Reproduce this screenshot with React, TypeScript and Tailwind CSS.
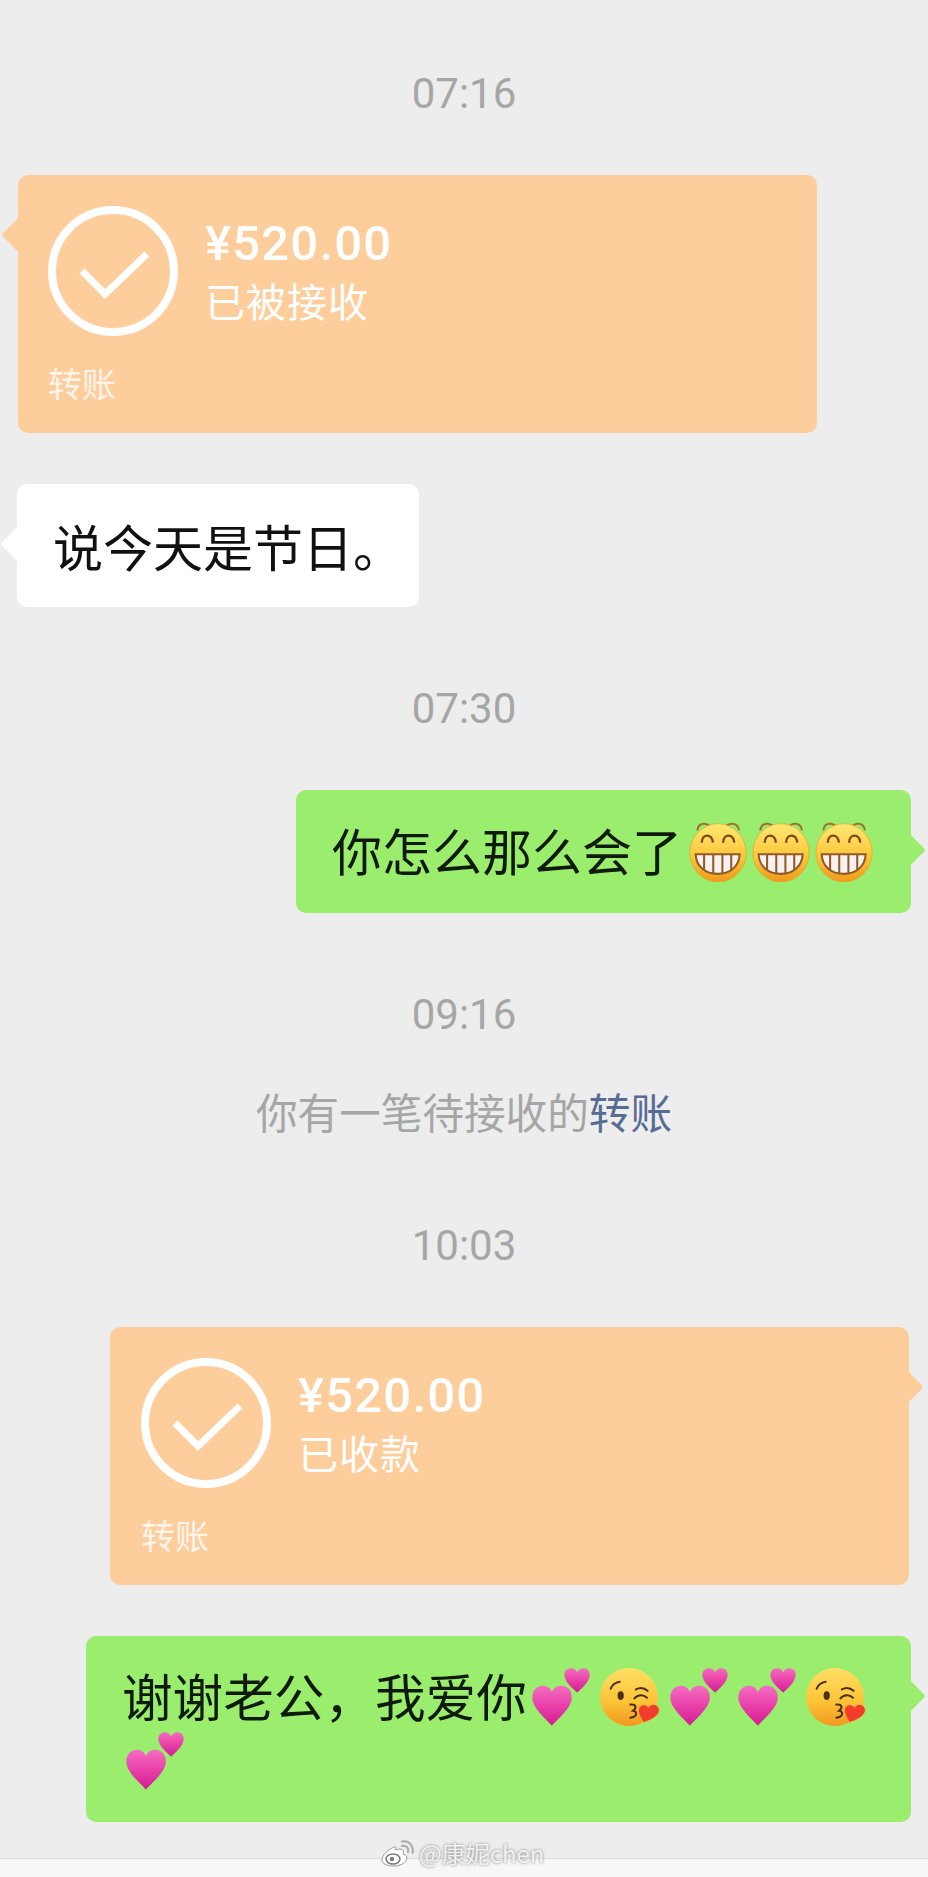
import React from "react";

function Time({ children, className = "" }: { children: React.ReactNode; className?: string }) {
  return (
    <div className={`h-[50px] text-center text-[42px] leading-[50px] text-[#a6a6a6] font-['Roboto',sans-serif] ${className}`}>
      {children}
    </div>
  );
}

function Notch({ side, color }: { side: "left" | "right"; color: string }) {
  return (
    <div
      className={`absolute top-[46px] h-[28px] w-[28px] rotate-45 rounded-[3px] ${color} ${
        side === "left" ? "left-[-11px]" : "right-[-9px]"
      }`}
    />
  );
}

function Check() {
  return (
    <svg width="130" height="130" viewBox="0 0 130 130" className="shrink-0">
      <circle cx="65" cy="65" r="61" fill="none" stroke="#fff" strokeWidth="8" />
      <path d="M34 65 L57 88 L99 48" fill="none" stroke="#fff" strokeWidth="7" />
    </svg>
  );
}

function Transfer({ status, side, className }: { status: string; side: "left" | "right"; className: string }) {
  return (
    <div className={`relative h-[258px] rounded-[10px] bg-[#fdcd9c] pt-[31px] text-white ${className}`}>
      <Notch side={side} color="bg-[#fdcd9c]" />
      <div className="relative flex items-center gap-[27px]">
        <Check />
        <div className="flex flex-col">
          <div className="h-[59px] pt-[2px] font-['Roboto',sans-serif] text-[49px] font-medium leading-[59px] tracking-[1.2px]">¥520.00</div>
          <div className="h-[59px] text-[40px] leading-[59px] tracking-[1px]">{status}</div>
        </div>
      </div>
      <div className="relative mt-[27px] h-[40px] text-[34px] leading-[40px] text-[#fff5ea]">转账</div>
    </div>
  );
}

function Grin() {
  const id = React.useId();
  return (
    <svg width="58" height="61" viewBox="0 0 170 180" className="shrink-0">
      <defs>
        <linearGradient id={id} x1="0" y1="0" x2="0" y2="1">
          <stop offset="0" stopColor="#ffe873" />
          <stop offset="0.55" stopColor="#fdc83c" />
          <stop offset="1" stopColor="#f09a1c" />
        </linearGradient>
      </defs>
      <path d="M24 28 C26 4 56 0 64 24" fill="none" stroke="#9c7033" strokeWidth="6" />
      <path d="M106 24 C114 0 144 4 147 28" fill="none" stroke="#9c7033" strokeWidth="6" />
      <ellipse cx="85" cy="94" rx="83" ry="86" fill={`url(#${id})`} stroke="#e6a02c" strokeWidth="2" />
      <path d="M37 64 C38 36 68 36 70 64" fill="none" stroke="#7c4a1c" strokeWidth="7" />
      <path d="M100 64 C101 36 131 36 133 64" fill="none" stroke="#7c4a1c" strokeWidth="7" />
      <path d="M19 98 H149 C147 135 120 156 84 156 C48 156 21 135 19 98 Z" fill="#fbf1f1" stroke="#8f5a26" strokeWidth="6" />
      <path d="M44 100 V144 M71 100 V155 M98 100 V155 M124 100 V144" stroke="#8f5a26" strokeWidth="6" />
    </svg>
  );
}

function Hearts() {
  const id = React.useId();
  return (
    <svg width="58" height="58" viewBox="0 0 170 172" className="shrink-0">
      <defs>
        <linearGradient id={id} x1="0" y1="0" x2="0" y2="1">
          <stop offset="0" stopColor="#f56cc2" />
          <stop offset="0.5" stopColor="#e840a8" />
          <stop offset="1" stopColor="#d41c94" />
        </linearGradient>
      </defs>
      <path
        d="M58 171 C40 150 0 118 0 88 C0 65 15 53 32 53 C44 53 53 60 58 72 C63 60 72 53 85 53 C103 53 117 65 117 88 C117 118 76 150 58 171 Z"
        fill={`url(#${id})`}
      />
      <path
        d="M133 73 C120 60 95 42 95 20 C95 8 104 1 115 1 C123 1 129 5 133 13 C137 5 144 1 151 1 C162 1 170 8 170 20 C170 42 146 60 133 73 Z"
        fill={`url(#${id})`}
      />
    </svg>
  );
}

function Kiss() {
  const id = React.useId();
  return (
    <svg width="60" height="58" viewBox="0 0 174 168" className="shrink-0">
      <defs>
        <linearGradient id={id} x1="0" y1="0" x2="0" y2="1">
          <stop offset="0" stopColor="#ffe064" />
          <stop offset="0.6" stopColor="#fcc236" />
          <stop offset="1" stopColor="#f2981e" />
        </linearGradient>
      </defs>
      <circle cx="84" cy="84" r="84" fill={`url(#${id})`} />
      <path d="M31 60 C35 50 44 42 57 40" fill="none" stroke="#4a2f14" strokeWidth="6" strokeLinecap="round" />
      <ellipse cx="60" cy="80" rx="9" ry="13" fill="#4a2f14" />
      <path d="M104 62 C115 56 128 57 138 66" fill="none" stroke="#4a2f14" strokeWidth="6" strokeLinecap="round" />
      <path d="M100 88 C110 76 126 76 136 86" fill="none" stroke="#4a2f14" strokeWidth="6" strokeLinecap="round" />
      <path d="M88 106 C104 104 108 114 96 124 C110 126 108 142 88 144" fill="none" stroke="#4a2f14" strokeWidth="6" strokeLinecap="round" />
      <path
        d="M126 158 C118 142 106 128 114 114 C120 104 134 104 140 114 C148 102 165 103 171 116 C177 132 158 148 126 158 Z"
        fill="#f23d2c"
        stroke="#fcc236"
        strokeWidth="2"
      />
    </svg>
  );
}

export default function App() {
  return (
    <div className="relative flex h-[1877px] w-[928px] flex-col overflow-hidden bg-[#ededed] pt-[69px] font-['Noto_Sans_CJK_SC',sans-serif]">
      <Time>07:16</Time>
      <Transfer status="已被接收" side="left" className="ml-[18px] mt-[56px] w-[799px] pl-[30px]" />

      <div className="relative ml-[17px] mt-[51px] h-[123px] w-[402px] rounded-[10px] bg-white pl-[36px] pt-[29px] text-[50px] leading-[64px] text-[#111]">
        <Notch side="left" color="bg-white" />
        <span className="relative">说今天是节日。</span>
      </div>

      <Time className="mt-[77px]">07:30</Time>

      <div className="relative ml-[296px] mt-[56px] h-[123px] w-[615px] rounded-[10px] bg-[#9aed6d] pl-[36px] pt-[29px] text-[50px] leading-[64px] text-[#0f1a0a]">
        <Notch side="right" color="bg-[#9aed6d]" />
        <div className="relative flex h-[64px] items-center">
          <span className="pb-[4px]">你怎么那么会了</span>
          <div className="ml-[7px] flex gap-[5px]">
            <Grin />
            <Grin />
            <Grin />
          </div>
        </div>
      </div>

      <Time className="mt-[77px]">09:16</Time>

      <div className="mt-[46px] h-[52px] text-center text-[41.6px] leading-[50px] text-[#a6a6a6]">
        你有一笔待接收的<span className="text-[#576b95]">转账</span>
      </div>

      <Time className="mt-[83px]">10:03</Time>

      <Transfer status="已收款" side="right" className="ml-[110px] mt-[56px] w-[799px] pl-[31px]" />

      <div className="relative ml-[86px] mt-[51px] h-[186px] w-[825px] rounded-[10px] bg-[#9aed6d] pl-[36px] pt-[29px] text-[50.6px] leading-[64px] text-[#0f1a0a]">
        <Notch side="right" color="bg-[#9aed6d]" />
        <div className="relative flex h-[64px] items-center">
          <span className="pb-[4px]">谢谢老公，我爱你</span>
          <div className="ml-[5px] flex gap-[10px]">
            <Hearts />
            <Kiss />
            <Hearts />
            <Hearts />
            <Kiss />
          </div>
        </div>
        <div className="relative flex h-[64px] items-center pl-[4px]">
          <Hearts />
        </div>
      </div>

      <div className="mt-auto h-[19px] border-t border-[#dcdcdc] bg-[#f7f7f7]" />

      <div className="absolute left-[381px] top-[1838px] flex h-[30px] items-center gap-[5px] text-[#f2f2f2] [text-shadow:0_0_3px_#777]">
        <svg width="33" height="27" viewBox="0 0 33 27">
          <path d="M13 7 C7 10 1 15 1 20 C1 24 7 26 13 26 C20 26 26 22 26 18 C26 15 23 15 22 14 C23 11 22 9 19 9 C17 9 15 10 14 10 C15 7 15 6 13 7 Z" fill="#fff" stroke="#9a9a9a" strokeWidth="1" />
          <ellipse cx="12" cy="19" rx="7" ry="5" fill="#fff" stroke="#777" strokeWidth="1.5" />
          <circle cx="11" cy="19" r="2.2" fill="#777" />
          <path d="M21 6 C25 5 28 8 27 12 M21 1.5 C28 0 33 6 31.5 13" fill="none" stroke="#a8a8a8" strokeWidth="2" strokeLinecap="round" />
        </svg>
        <span className="text-[24px] leading-[30px]">@康妮chen</span>
      </div>
    </div>
  );
}
